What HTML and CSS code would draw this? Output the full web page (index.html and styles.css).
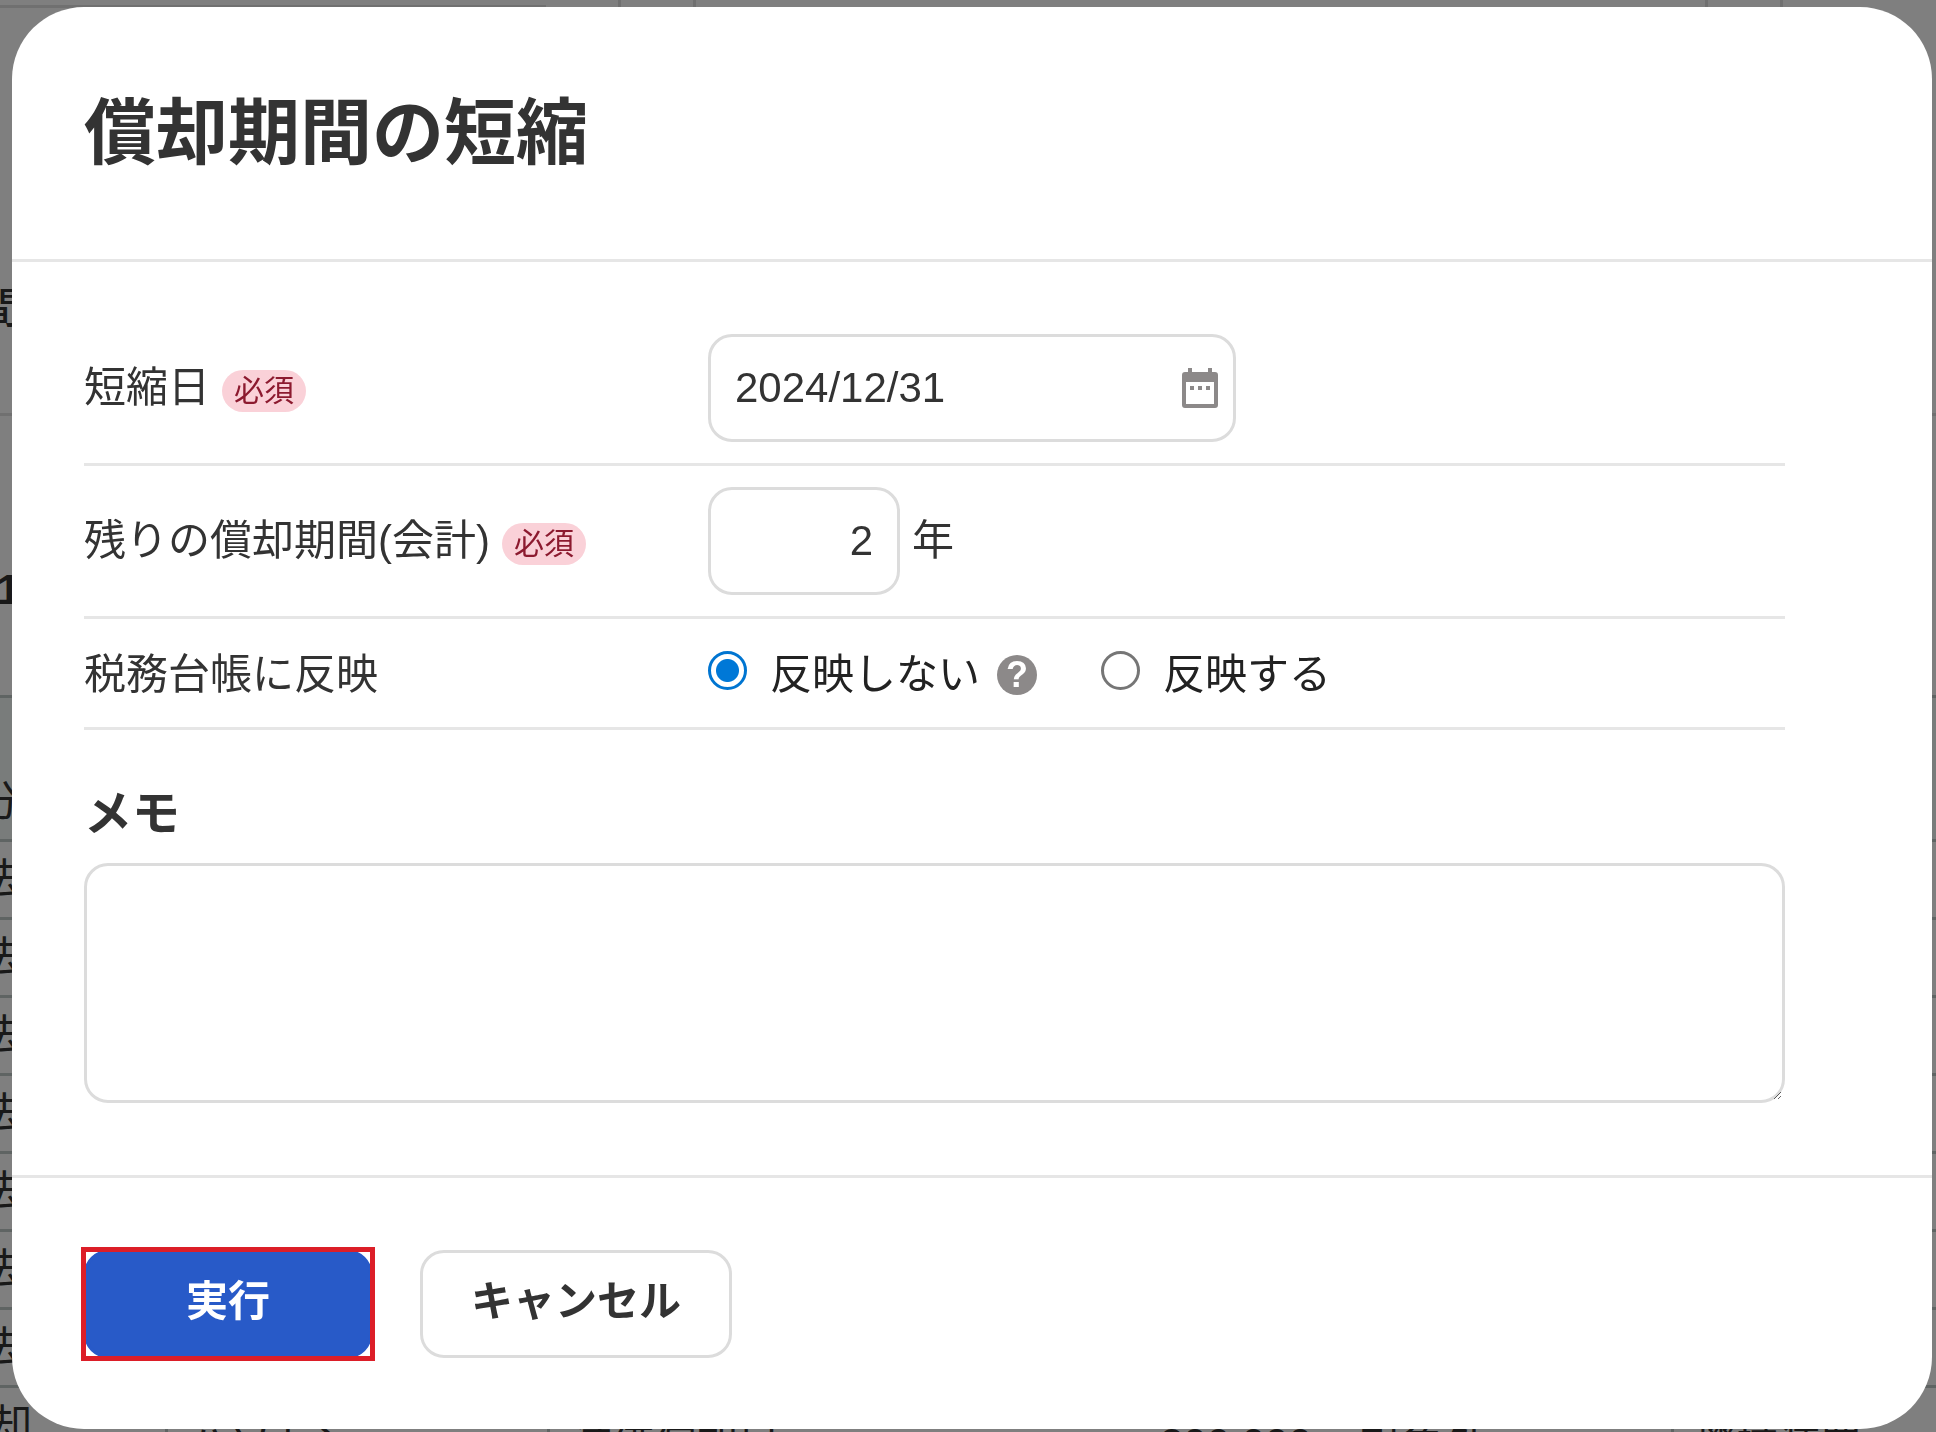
FILE: index.html
```
<!DOCTYPE html>
<html lang="ja">
<head>
    <meta charset="UTF-8">
    <meta name="viewport" content="width=device-width, initial-scale=1.0">
    <title>償却期間の短縮</title>
    <link rel="stylesheet" href="styles.css">
</head>
<body>
    <div class="page" aria-hidden="true">
        <div class="topbar">
            <div class="topbar-line"></div>
            <div class="topbar-cell"></div>
            <div class="topbar-space"></div>
            <div class="topbar-cell"></div>
            <div class="topbar-end"></div>
        </div>
        <div class="section section-title"><span class="edge">期間</span></div>
        <div class="section section-value"><span class="edge">1</span></div>
        <div class="section section-head"><span class="edge">区分</span></div>
        <div class="row"><span class="edge">定額法</span></div>
        <div class="row"><span class="edge">定額法</span></div>
        <div class="row"><span class="edge">定額法</span></div>
        <div class="row"><span class="edge">定額法</span></div>
        <div class="row"><span class="edge">定額法</span></div>
        <div class="row"><span class="edge">定額法</span></div>
        <div class="row"><span class="edge">定額法</span></div>
        <div class="row row-last">
            <span class="edge edge-wide">償却</span>
            <span class="cell cell-name">ハソトン</span>
            <span class="cell cell-account">減価償却目</span>
            <span class="cell-amount">200,000</span>
            <span class="cell-target">対象外</span>
            <span class="cell cell-kind">機械装置</span>
        </div>
    </div>

    <div class="overlay">
        <form class="modal" role="dialog" aria-labelledby="modal-title">
            <div class="modal-header">
                <h1 id="modal-title">償却期間の短縮</h1>
            </div>

            <div class="modal-body">
                <div class="field">
                    <div class="field-label">
                        <label for="date">短縮日</label>
                        <span class="badge">必須</span>
                    </div>
                    <div class="date-box">
                        <input type="text" id="date" class="input" value="2024/12/31">
                        <svg class="calendar" viewBox="0 0 36 40" width="36" height="40">
                            <path fill-rule="evenodd" d="M6 0h4v4h16V0h4v4h3a3 3 0 0 1 3 3v30a3 3 0 0 1-3 3H3a3 3 0 0 1-3-3V7a3 3 0 0 1 3-3h3zM4 14v22h28V14zM8 18h4v4H8zM16 18h4v4h-4zM24 18h4v4h-4z"/>
                        </svg>
                    </div>
                </div>
                <div class="field">
                    <div class="field-label">
                        <label for="years">残りの償却期間(会計)</label>
                        <span class="badge">必須</span>
                    </div>
                    <div class="years-box">
                        <input type="text" id="years" class="input input-years" value="2">
                        <span>年</span>
                    </div>
                </div>
                <div class="field field-radio">
                    <div class="field-label" id="reflect-label">税務台帳に反映</div>
                    <div class="radios" role="radiogroup" aria-labelledby="reflect-label">
                        <input type="radio" id="reflect-no" name="reflect" checked>
                        <label for="reflect-no">反映しない</label>
                        <button type="button" class="help">?</button>
                        <input type="radio" id="reflect-yes" name="reflect">
                        <label for="reflect-yes">反映する</label>
                    </div>
                </div>
                <label class="memo-label" for="memo">メモ</label>
                <textarea id="memo" class="memo"></textarea>
            </div>

            <div class="modal-footer">
                <div class="highlight">
                    <button type="button" class="button button-primary">実行</button>
                </div>
                <button type="button" class="button">キャンセル</button>
            </div>
        </form>
    </div>
</body>
</html>
```
FILE: styles.css
```
* {
    box-sizing: border-box;
}
body {
    margin: 0;
    font-family: "Liberation Sans", "Noto Sans CJK JP", sans-serif;
    font-size: 42px;
    line-height: 60px;
    color: #333;
    background-color: white;
}
input, button, textarea {
    font: inherit;
    color: inherit;
}

/* page behind the dialog */
.page {
    height: 100vh;
    overflow: hidden;
}
.topbar {
    display: flex;
    height: 8px;
}
.topbar-line {
    width: 546px;
    margin-right: 72px;
    border-bottom: 3px solid #e0e0e0;
}
.topbar-cell {
    width: 78px;
    border-left: 3px solid #e0e0e0;
    border-right: 3px solid #e0e0e0;
}
.topbar-space {
    flex: 1;
}
.topbar-end {
    width: 153px;
}
.section {
    display: flex;
    align-items: center;
    border-bottom: 3px solid #e0e0e0;
}
.section-title {
    height: 408px;
    padding-top: 196px;
    font-weight: 500;
}
.section-value {
    height: 282px;
    padding-top: 68px;
    border-color: #bfc8c6;
    font-weight: bold;
}
.section-head {
    height: 144px;
    padding-top: 66px;
    border-color: #bfc8c6;
    background-color: #f2f8f6;
}
.row {
    display: flex;
    align-items: center;
    height: 78px;
    border-bottom: 3px solid #bfc8c6;
}
.edge {
    display: flex;
    flex: none;
    justify-content: flex-end;
    width: 20px;
    white-space: nowrap;
}
.edge-wide {
    width: 32px;
}
.row-last {
    height: 90px;
    align-items: stretch;
    padding-top: 8px;
    white-space: nowrap;
}
.cell, .cell-amount, .cell-target {
    padding-top: 18px;
}
.cell {
    border-left: 3px solid #bfc8c6;
    padding-left: 20px;
}
.cell-name {
    width: 382px;
    margin-left: 133px;
}
.cell-account {
    width: 613px;
}
.cell-amount {
    width: 200px;
}
.cell-target {
    flex: 1;
}
.cell-kind {
    width: 265px;
}

/* dialog */
.overlay {
    position: fixed;
    inset: 0;
    padding: 7px 4px 4px 12px;
    overflow: auto;
    background-color: rgba(0, 0, 0, 0.5);
}
.modal {
    border-radius: 72px;
    background-color: white;
}
.modal-header {
    padding: 72px;
    border-bottom: 3px solid #e6e6e6;
}
.modal-header h1 {
    margin: 0;
    font-size: 72px;
    line-height: 108px;
}
.modal-body {
    padding: 72px 147px 72px 72px;
}
.field {
    display: flex;
    align-items: center;
    padding: 21px 0;
    border-bottom: 3px solid #e6e6e6;
}
.field:first-child {
    padding-top: 0;
}
.field-radio {
    padding: 26px 0 22px;
}
.field-label {
    display: flex;
    align-items: center;
    flex: none;
    width: 624px;
}
.badge {
    margin: 6px 0 0 12px;
    padding: 0 12px;
    border-radius: 21px;
    font-size: 30px;
    line-height: 42px;
    color: #8c1a2f;
    background-color: #fad1d8;
}
.input {
    width: 100%;
    height: 108px;
    padding: 0 24px;
    border: 3px solid #dcdcdc;
    border-radius: 24px;
    background-color: white;
}
.date-box {
    position: relative;
    width: 528px;
}
.calendar {
    position: absolute;
    top: 34px;
    right: 18px;
    fill: #8c8989;
}
.years-box {
    display: flex;
    align-items: center;
    gap: 12px;
}
.input-years {
    width: 192px;
    text-align: right;
}
.radios {
    display: flex;
    align-items: center;
    color: #222;
}
.radios input {
    appearance: none;
    width: 39px;
    height: 39px;
    margin: 0 23px 9px 0;
    border: 3px solid #767676;
    border-radius: 50%;
}
.radios input:checked {
    border-color: #0075d1;
    background: radial-gradient(circle, #0078d7 11px, white 12px);
}
.help {
    width: 40px;
    height: 40px;
    margin: 0 64px 0 17px;
    padding: 0;
    border: none;
    border-radius: 50%;
    font-size: 36px;
    font-weight: bold;
    line-height: 40px;
    color: white;
    background-color: #8c8989;
}
.memo-label {
    display: block;
    margin: 48px 0 13px;
    font-size: 48px;
    font-weight: bold;
    line-height: 72px;
}
.memo {
    display: block;
    width: 100%;
    height: 240px;
    padding: 24px;
    border: 3px solid #dcdcdc;
    border-radius: 24px;
    resize: vertical;
}
.modal-footer {
    display: flex;
    gap: 48px;
    padding: 72px 72px 71px;
    border-top: 3px solid #e6e6e6;
}
.button {
    height: 108px;
    padding: 0 48px 4px;
    border: 3px solid #dcdcdc;
    border-radius: 24px;
    font-weight: bold;
    background-color: white;
}
.button-primary {
    display: block;
    width: 288px;
    border-color: #285ac8;
    color: white;
    background-color: #285ac8;
}
.highlight {
    outline: 5px solid #dc1e28;
    outline-offset: -2px;
}
```
